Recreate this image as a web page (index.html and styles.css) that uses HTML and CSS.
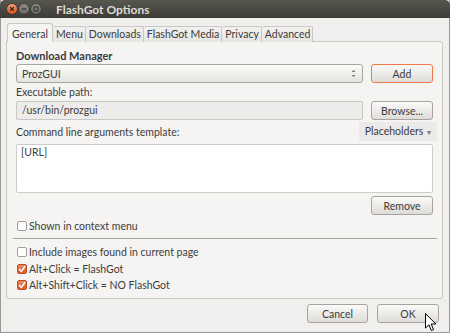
FILE: index.html
```html
<!DOCTYPE html>
<html lang="en">
<head>
    <meta charset="UTF-8">
    <title>FlashGot Options</title>
    <link rel="stylesheet" href="styles.css">
</head>
<body>
    <div class="window">
        <div class="titlebar">
            <div class="controls">
                <span class="ctl close"><svg width="10" height="10" viewBox="0 0 10 10"><path d="M3.2 3.2 L6.8 6.8 M6.8 3.2 L3.2 6.8" stroke="#3a2a22" stroke-width="1.3"/></svg></span>
                <span class="ctl"><svg width="10" height="10" viewBox="0 0 10 10"><path d="M2.8 5 H7.2" stroke="#3c3b37" stroke-width="1.4"/></svg></span>
                <span class="ctl"><svg width="10" height="10" viewBox="0 0 10 10"><rect x="3" y="3" width="4" height="4" fill="none" stroke="#3c3b37" stroke-width="1.2"/></svg></span>
            </div>
            <div class="title">FlashGot Options</div>
        </div>

        <div class="content">
            <div class="tabs">
                <div class="tab active">General</div>
                <div class="tab">Menu</div>
                <div class="tab">Downloads</div>
                <div class="tab">FlashGot Media</div>
                <div class="tab">Privacy</div>
                <div class="tab">Advanced</div>
            </div>

            <div class="panel">
                <div class="section-title">Download Manager</div>
                <div class="row">
                    <div class="combo">
                        <span>ProzGUI</span>
                        <span class="spin">
                            <svg width="5" height="9" viewBox="0 0 5 9"><path d="M0.5 3 L2.5 1 L4.5 3 Z M0.5 6 L2.5 8 L4.5 6 Z" fill="#7a7874"/></svg>
                        </span>
                    </div>
                    <button class="btn focused">Add</button>
                </div>

                <div class="label">Executable path:</div>
                <div class="row">
                    <div class="field">/usr/bin/prozgui</div>
                    <button class="btn">Browse...</button>
                </div>

                <div class="row template-head">
                    <div class="label-inline">Command line arguments template:</div>
                    <div class="menu-btn">Placeholders <span class="arrow">&#9662;</span></div>
                </div>
                <div class="textarea">[URL]</div>
                <div class="row right">
                    <button class="btn">Remove</button>
                </div>

                <label class="check"><span class="box"></span>Shown in context menu</label>

                <div class="separator"></div>

                <div class="checks">
                    <label class="check"><span class="box"></span>Include images found in current page</label>
                    <label class="check"><span class="box on"><svg width="8" height="8" viewBox="0 0 8 8"><path d="M1 4 L3.3 6.4 L7 1.2" fill="none" stroke="#fff" stroke-width="1.5"/></svg></span>Alt+Click = FlashGot</label>
                    <label class="check"><span class="box on"><svg width="8" height="8" viewBox="0 0 8 8"><path d="M1 4 L3.3 6.4 L7 1.2" fill="none" stroke="#fff" stroke-width="1.5"/></svg></span>Alt+Shift+Click = NO FlashGot</label>
                </div>
            </div>

            <div class="footer">
                <button class="btn cancel">Cancel</button>
                <button class="btn ok">OK</button>
            </div>
        </div>

        <svg class="cursor" width="12" height="19" viewBox="0 0 12 19">
            <path d="M0.5 0.5 L0.5 15 L4 11.8 L6.3 17.5 L8.5 16.6 L6.2 11 L10.8 11 Z" fill="#fff" stroke="#000" stroke-width="1"/>
        </svg>
    </div>
</body>
</html>
```

FILE: styles.css
```css
html, body {
    margin: 0;
    padding: 0;
    width: 450px;
    height: 333px;
    overflow: hidden;
    background-color: #f2f1f0;
}

body {
    font-family: "Lato", "DejaVu Sans", sans-serif;
    font-size: 10.5px;
    color: #3c3c3c;
}

.window {
    position: relative;
    width: 450px;
    height: 333px;
    box-sizing: border-box;
    display: flex;
    flex-direction: column;
    background-color: #f0efee;
    border: 1px solid #9b9995;
    border-top: none;
}

.titlebar {
    height: 18px;
    margin: 0 -1px;
    display: flex;
    align-items: center;
    background: linear-gradient(#57564f, #3c3b37);
    border-radius: 5px 5px 0 0;
}

.controls {
    display: flex;
    gap: 2px;
    margin-left: 7px;
}

.ctl {
    width: 10px;
    height: 10px;
    border-radius: 50%;
    background: linear-gradient(#8c8a84, #6b6964);
    box-shadow: 0 0 0 0.5px #2f2e2b;
    display: flex;
}

.ctl.close {
    background: linear-gradient(#f59a6c, #e0561f);
}

.title {
    margin-left: 15px;
    font-weight: bold;
    font-size: 12px;
    color: #dfdbd2;
}

.content {
    flex: 1;
    display: flex;
    flex-direction: column;
    padding: 5px 6px 0 5px;
}

.tabs {
    display: flex;
    align-items: flex-end;
    height: 19px;
    padding-left: 1px;
    position: relative;
    z-index: 1;
    margin-bottom: -1px;
}

.tab {
    height: 15px;
    line-height: 15px;
    padding: 0 2px 0 3px;
    border: 1px solid #c9c7c3;
    border-bottom: none;
    border-left: none;
    background: linear-gradient(#f2f1ef, #e6e5e2);
    border-radius: 2px 2px 0 0;
    white-space: nowrap;
}

.tab.active {
    height: 18px;
    line-height: 20px;
    padding: 0 4px;
    border-left: 1px solid #c9c7c3;
    background-color: #f5f4f3;
    background-image: none;
    border-radius: 3px 3px 0 0;
}

.panel {
    height: 256px;
    display: flex;
    flex-direction: column;
    padding: 0 9px;
    background-color: #f5f4f3;
    border: 1px solid #c9c7c3;
    border-radius: 0 3px 3px 3px;
}

.section-title {
    font-weight: bold;
    font-size: 11px;
    height: 13px;
    line-height: 14px;
    margin-top: 7px;
}

.row {
    display: flex;
    gap: 8px;
    margin-top: 2px;
    height: 19px;
}

.row.right {
    justify-content: flex-end;
    margin-top: 3px;
}

.combo {
    flex: 1;
    box-sizing: border-box;
    display: flex;
    align-items: center;
    justify-content: space-between;
    padding: 0 6px 0 5px;
    border: 1px solid #a9a7a2;
    border-radius: 3px;
    background: linear-gradient(#fbfbfa, #e4e3e0);
}

.spin {
    display: flex;
}

.btn {
    width: 62px;
    height: 19px;
    padding: 0;
    font-family: inherit;
    font-size: 10.5px;
    color: #3c3c3c;
    border: 1px solid #a7a49f;
    border-radius: 3px;
    background: linear-gradient(#fafaf9, #dedcd8);
}

.btn.focused {
    border-color: #f07746;
}

.label {
    height: 13px;
    padding-top: 3px;
    line-height: 13px;
}

.field {
    flex: 1;
    box-sizing: border-box;
    line-height: 17px;
    padding-left: 5px;
    border: 1px solid #cac8c4;
    border-radius: 2px;
    background-color: #edecea;
}

.template-head {
    justify-content: space-between;
    align-items: center;
}

.menu-btn {
    height: 19px;
    line-height: 19px;
    padding: 0 6px;
    margin-right: -4px;
    background-color: #eceae8;
}

.arrow {
    font-size: 8px;
    color: #7a7874;
    margin-left: 1px;
}

.textarea {
    margin-top: 3px;
    height: 49px;
    box-sizing: border-box;
    padding: 1px 4px;
    border: 1px solid #cfcdc9;
    border-radius: 2px;
    background-color: #fff;
}

.check {
    display: flex;
    align-items: center;
    gap: 2px;
    height: 16px;
}

.panel > .check {
    margin-top: 3px;
}

.box {
    width: 8px;
    height: 8px;
    margin-left: 1px;
    border: 1px solid #a19f9a;
    border-radius: 2px;
    background-color: #fff;
    display: flex;
}

.box.on {
    border-color: #b8512a;
    background: linear-gradient(#f18a5c, #dd5a26);
}

.separator {
    margin: 4px -4px 0 -3px;
    height: 1px;
    background-color: #a6a4a0;
}

.checks {
    margin-top: 5px;
    display: flex;
    flex-direction: column;
    gap: 0.5px;
}

.footer {
    display: flex;
    justify-content: flex-end;
    gap: 9px;
    padding: 5px 4px 0 0;
}

.btn.cancel {
    width: 61px;
}

.cursor {
    position: absolute;
    left: 424px;
    top: 313px;
}
```
